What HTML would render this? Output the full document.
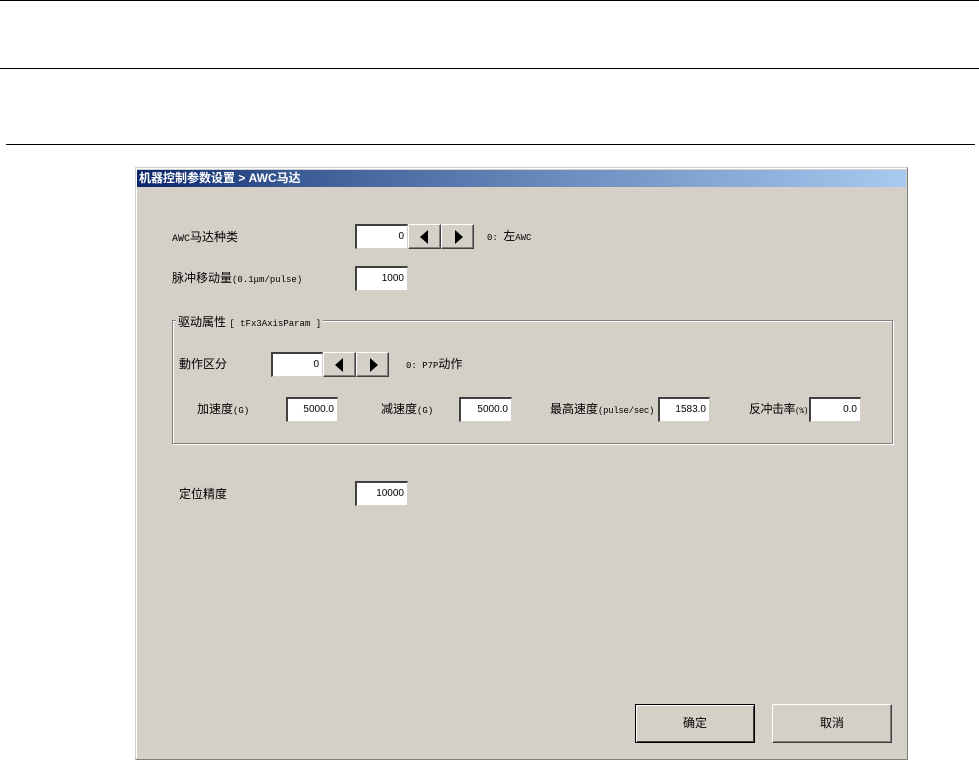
<!DOCTYPE html>
<html><head><meta charset="utf-8"><style>
body{margin:0;width:979px;height:759px;background:#fff;position:relative;overflow:hidden;font-family:"Liberation Sans","Noto Sans CJK SC",sans-serif;font-size:11px;color:#000}
.a{position:absolute}
.hl{position:absolute;height:1px;background:#000}
.dlg{position:absolute;left:135px;top:167px;width:771px;height:591px;background:#d4d0c8;border:1px solid #808080;border-top-color:#d4d0c8;border-left-color:#d4d0c8;box-shadow:inset 1px 1px 0 #fff}
.tb{position:absolute;left:137px;top:170px;width:769px;height:17px;background:linear-gradient(90deg,#0a246a,#3a5a94 20%,#6b8cbd 55%,#a6caf0);color:#fff;font-weight:bold;font-size:12px;line-height:17px;padding-left:2px;box-sizing:border-box}
.in{position:absolute;background:#fff;border-top:2px solid #404040;border-left:2px solid #404040;border-right:1px solid #d4d0c8;border-bottom:1px solid #d4d0c8;box-sizing:border-box;text-align:right;padding-right:3px;font-size:10px;line-height:22px;height:25px}
.bt{position:absolute;width:33px;height:25px;background:#d4d0c8;box-sizing:border-box;border-top:1px solid #fff;border-left:1px solid #fff;border-right:1px solid #404040;border-bottom:1px solid #404040;box-shadow:inset -1px -1px 0 #808080}
.l{position:absolute;font-size:12px;line-height:14px;white-space:nowrap}
.m{font-family:"Liberation Mono",monospace;font-size:9px}
.big{position:absolute;width:120px;height:39px;background:#d4d0c8;box-sizing:border-box;border-top:1px solid #fff;border-left:1px solid #fff;border-right:1px solid #404040;border-bottom:1px solid #404040;box-shadow:inset -1px -1px 0 #808080;text-align:center;line-height:37px;font-size:12px}
.tri{position:absolute;top:5px;width:0;height:0;border-top:7px solid transparent;border-bottom:7px solid transparent}
</style></head><body>
<div class="hl" style="left:0;top:0;width:979px"></div>
<div class="hl" style="left:0;top:68px;width:979px"></div>
<div class="hl" style="left:6px;top:144px;width:969px"></div>
<div class="dlg"></div>
<div class="tb">机器控制参数设置 &gt; AWC马达</div>

<div class="l" style="left:172px;top:230px"><span class="m" style="font-size:10px">AWC</span>马达种类</div>
<div class="in" style="left:355px;top:224px;width:53px">0</div>
<div class="bt" style="left:408px;top:224px"><div class="tri" style="left:11px;border-right:8px solid #000"></div></div>
<div class="bt" style="left:441px;top:224px"><div class="tri" style="left:13px;border-left:8px solid #000"></div></div>
<div class="l" style="left:487px;top:229px"><span class="m">0: </span>左<span class="m">AWC</span></div>

<div class="l" style="left:172px;top:271px">脉冲移动量<span class="m">(0.1μm/pulse)</span></div>
<div class="in" style="left:355px;top:266px;width:53px">1000</div>

<div class="a" style="left:172px;top:320px;width:719px;height:122px;border:1px solid #808080;box-shadow:1px 1px 0 #fff, inset 1px 1px 0 #fff"></div>
<div class="l" style="left:176px;top:315px;background:#d4d0c8;padding:0 2px">驱动属性 <span class="m">[ tFx3AxisParam ]</span></div>

<div class="l" style="left:179px;top:357px">動作区分</div>
<div class="in" style="left:271px;top:352px;width:52px">0</div>
<div class="bt" style="left:323px;top:352px"><div class="tri" style="left:11px;border-right:8px solid #000"></div></div>
<div class="bt" style="left:356px;top:352px"><div class="tri" style="left:13px;border-left:8px solid #000"></div></div>
<div class="l" style="left:406px;top:357px"><span class="m">0: P7P</span>动作</div>

<div class="l" style="left:197px;top:402px">加速度<span class="m">(G)</span></div>
<div class="in" style="left:286px;top:397px;width:52px">5000.0</div>
<div class="l" style="left:381px;top:402px">减速度<span class="m">(G)</span></div>
<div class="in" style="left:459px;top:397px;width:53px">5000.0</div>
<div class="l" style="left:550px;top:402px">最高速度<span class="m" style="letter-spacing:-0.3px">(pulse/sec)</span></div>
<div class="in" style="left:658px;top:397px;width:52px">1583.0</div>
<div class="l" style="left:749px;top:402px;letter-spacing:-0.5px">反冲击率<span class="m" style="font-size:8px">(%)</span></div>
<div class="in" style="left:809px;top:397px;width:52px">0.0</div>

<div class="l" style="left:179px;top:487px">定位精度</div>
<div class="in" style="left:355px;top:481px;width:53px">10000</div>

<div class="big" style="left:635px;top:704px;border:1px solid #000;box-shadow:inset 1px 1px 0 #fff,inset -1px -1px 0 #404040">确定</div>
<div class="big" style="left:772px;top:704px">取消</div>
</body></html>
